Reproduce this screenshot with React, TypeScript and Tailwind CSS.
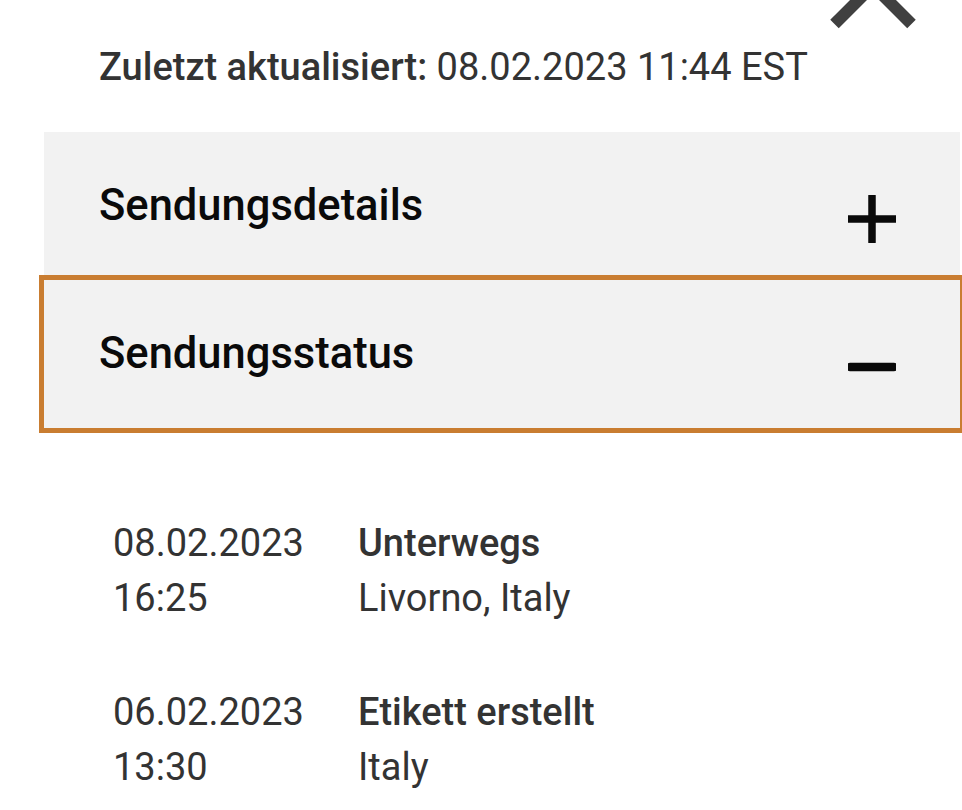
import React from "react";

type Event = {
  date: string;
  time: string;
  status: string;
  place: string;
};

const events: Event[] = [
  { date: "08.02.2023", time: "16:25", status: "Unterwegs", place: "Livorno, Italy" },
  { date: "06.02.2023", time: "13:30", status: "Etikett erstellt", place: "Italy" },
];

const ChevronUp = () => (
  <svg width="110" height="40" viewBox="0 0 110 40" fill="none">
    <path d="M14.5 24 L53 -14.5 L91.5 24" stroke="#404040" strokeWidth="12" strokeLinejoin="miter" />
  </svg>
);

const PlusIcon = () => (
  <svg width="48" height="48" viewBox="0 0 48 48" fill="none">
    <path d="M1 24 H47 M24 1 V47" stroke="#0a0a0a" strokeWidth="7.5" strokeLinecap="round" />
  </svg>
);

const MinusIcon = () => (
  <svg width="48" height="48" viewBox="0 0 48 48" fill="none">
    <path d="M2 24 H46" stroke="#0a0a0a" strokeWidth="8.5" strokeLinecap="round" />
  </svg>
);

export default function App() {
  return (
    <div
      className="relative w-[962px] h-[810px] overflow-hidden bg-white"
      style={{ fontFamily: "Roboto, 'Noto Sans', sans-serif" }}
    >
      <button className="absolute top-0 right-[32px]" aria-label="Schließen">
        <ChevronUp />
      </button>

      <p className="pt-[45px] pl-[99px] text-[38px] leading-[44px] text-[#333]">
        <span className="font-medium">Zuletzt aktualisiert:</span> 08.02.2023 11:44 EST
      </p>

      <div className="mt-[43px] ml-[44px] mr-[2px]">
        <div className="flex h-[148px] items-center justify-between bg-[#f2f2f2] pl-[55px] pr-[64px]">
          <span className="text-[43.5px] font-medium leading-[52px] text-[#0a0a0a]">Sendungsdetails</span>
          <span className="mt-[26px]">
            <PlusIcon />
          </span>
        </div>
        <div className="flex h-[148px] items-center justify-between bg-[#f2f2f2] pl-[55px] pr-[64px] ring-[5px] ring-[#c97d31]">
          <span className="text-[43.5px] font-medium leading-[52px] text-[#0a0a0a]">Sendungsstatus</span>
          <span className="mt-[26px]">
            <MinusIcon />
          </span>
        </div>
      </div>

      <ul className="mt-[88px] flex flex-col gap-[59px] pl-[113px] text-[38px] leading-[55px] text-[#333]">
        {events.map((e) => (
          <li key={e.date} className="flex">
            <div className="w-[245px]">
              <div>{e.date}</div>
              <div>{e.time}</div>
            </div>
            <div>
              <div className="font-medium">{e.status}</div>
              <div>{e.place}</div>
            </div>
          </li>
        ))}
      </ul>
    </div>
  );
}
